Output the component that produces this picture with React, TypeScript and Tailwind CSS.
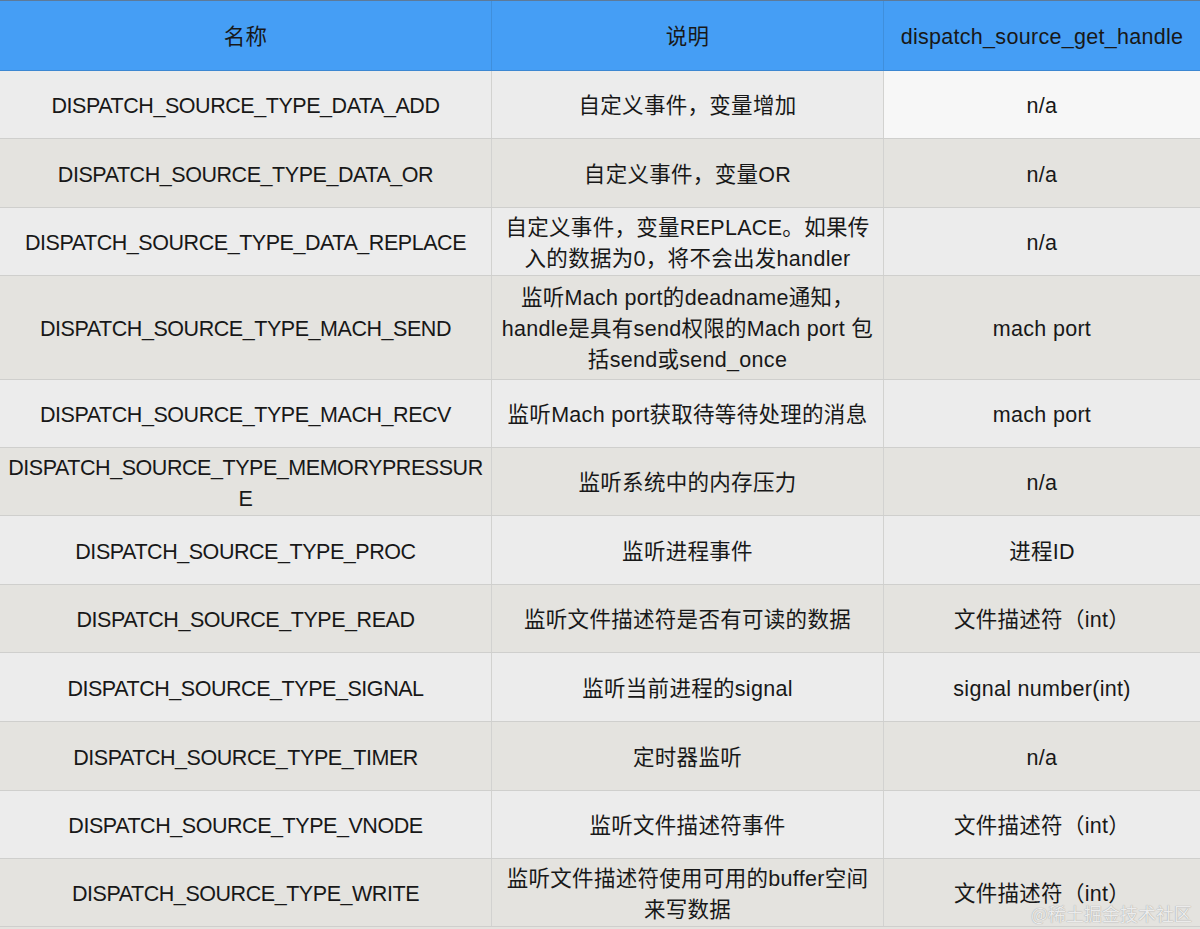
const rows: { name: React.ReactNode; desc: React.ReactNode; handle: string; h: string }[] = [
  { name: "DISPATCH_SOURCE_TYPE_DATA_ADD", desc: "自定义事件，变量增加", handle: "n/a", h: "h-[68px]" },
  { name: "DISPATCH_SOURCE_TYPE_DATA_OR", desc: "自定义事件，变量OR", handle: "n/a", h: "h-[69px]" },
  {
    name: "DISPATCH_SOURCE_TYPE_DATA_REPLACE",
    desc: (
      <>
        自定义事件，变量REPLACE。如果传
        <br />
        入的数据为0，将不会出发handler
      </>
    ),
    handle: "n/a",
    h: "h-[68px]",
  },
  {
    name: "DISPATCH_SOURCE_TYPE_MACH_SEND",
    desc: (
      <>
        监听Mach port的deadname通知，
        <br />
        handle是具有send权限的Mach port 包
        <br />
        括send或send_once
      </>
    ),
    handle: "mach port",
    h: "h-[104px]",
  },
  { name: "DISPATCH_SOURCE_TYPE_MACH_RECV", desc: "监听Mach port获取待等待处理的消息", handle: "mach port", h: "h-[68px]" },
  {
    name: (
      <>
        DISPATCH_SOURCE_TYPE_MEMORYPRESSUR
        <br />E
      </>
    ),
    desc: "监听系统中的内存压力",
    handle: "n/a",
    h: "h-[68px]",
  },
  { name: "DISPATCH_SOURCE_TYPE_PROC", desc: "监听进程事件", handle: "进程ID", h: "h-[69px]" },
  { name: "DISPATCH_SOURCE_TYPE_READ", desc: "监听文件描述符是否有可读的数据", handle: "文件描述符（int）", h: "h-[68px]" },
  { name: "DISPATCH_SOURCE_TYPE_SIGNAL", desc: "监听当前进程的signal", handle: "signal number(int)", h: "h-[69px]" },
  { name: "DISPATCH_SOURCE_TYPE_TIMER", desc: "定时器监听", handle: "n/a", h: "h-[69px]" },
  { name: "DISPATCH_SOURCE_TYPE_VNODE", desc: "监听文件描述符事件", handle: "文件描述符（int）", h: "h-[68px]" },
  {
    name: "DISPATCH_SOURCE_TYPE_WRITE",
    desc: (
      <>
        监听文件描述符使用可用的buffer空间
        <br />
        来写数据
      </>
    ),
    handle: "文件描述符（int）",
    h: "h-[68px]",
  },
];

export default function App() {
  return (
    <div
      className="relative w-[1200px] h-[929px] overflow-hidden bg-[#e4e3df] text-[#181818] text-[21.5px] leading-[31px]"
      style={{ fontFamily: '"Liberation Sans", "Noto Sans CJK SC", sans-serif' }}
    >
      {/* Header */}
      <div className="grid grid-cols-[492px_392px_316px] h-[71px] bg-[#459ef5] border-t border-[#5d7a99] border-b border-b-[#3c87d2] tracking-[0.3px]">
        <div className="flex items-center justify-center pt-[4px] border-r border-[#3f8fdc]">名称</div>
        <div className="flex items-center justify-center pt-[4px] border-r border-[#3f8fdc]">说明</div>
        <div className="flex items-center justify-center pt-[4px]">dispatch_source_get_handle</div>
      </div>

      {/* Body */}
      {rows.map((r, i) => (
        <div
          key={i}
          className={`grid grid-cols-[492px_392px_316px] ${r.h} border-b border-[#cfcfcd] ${
            i % 2 === 0 ? "bg-[#ececec]" : "bg-[#e4e3df]"
          }`}
        >
          <div className="flex items-center justify-center text-center px-1 pt-[4px] border-r border-[#d2d2d0] tracking-[-0.45px]">
            <span>{r.name}</span>
          </div>
          <div className="flex items-center justify-center text-center px-1 pt-[4px] border-r border-[#d2d2d0] tracking-[0.3px]">
            <span>{r.desc}</span>
          </div>
          <div
            className={`flex items-center justify-center text-center px-1 pt-[4px] tracking-[0.3px] ${
              i === 0 ? "bg-[#f7f7f7]" : ""
            }`}
          >
            <span>{r.handle}</span>
          </div>
        </div>
      ))}

      {/* Watermark */}
      <div
        className="absolute right-[8px] bottom-[5px] text-[18px] leading-[22px] text-[#ececec] [text-shadow:0_0_1px_#8c8c8c]"
        style={{ fontFamily: '"Noto Sans CJK SC", sans-serif' }}
      >
        @稀土掘金技术社区
      </div>
    </div>
  );
}
